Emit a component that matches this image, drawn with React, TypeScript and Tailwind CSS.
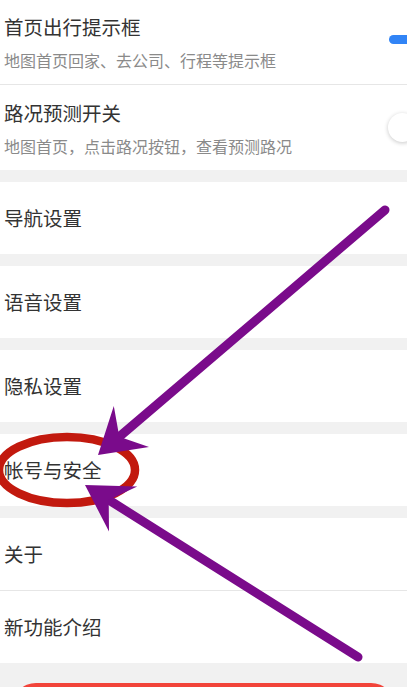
import React from "react";

function Band() {
  return <div className="h-[12px] bg-[#f1f1f1]" />;
}

function Row({ label, className = "" }: { label: string; className?: string }) {
  return (
    <div className={`flex items-center bg-white px-1 ${className}`}>
      <span className="text-[19.5px] leading-7 text-[#333333]">{label}</span>
    </div>
  );
}

export default function App() {
  return (
    <div className="relative h-[687px] w-full overflow-hidden bg-[#f1f1f1] font-['Noto_Sans_CJK_SC','Noto_Sans',sans-serif]">
      {/* Row 1 */}
      <div className="flex h-[85px] border-b border-[#e6e6e6] bg-white pl-1">
        <div className="flex flex-col pt-[13px]">
          <span className="text-[19.5px] leading-7 text-[#333333]">首页出行提示框</span>
          <span className="mt-2 text-[16px] leading-[22px] text-[#8a8a8a]">地图首页回家、去公司、行程等提示框</span>
        </div>
        <div className="ml-auto mt-[35px] h-[9px] w-[18px] shrink-0 self-start rounded-l-full bg-[#3184f6]" />
      </div>
      {/* Row 2 */}
      <div className="flex h-[85px] items-center bg-white pl-1">
        <div className="flex flex-col self-start pt-[14px]">
          <span className="text-[19.5px] leading-7 text-[#333333]">路况预测开关</span>
          <span className="mt-2 text-[16px] leading-[22px] text-[#8a8a8a]">地图首页，点击路况按钮，查看预测路况</span>
        </div>
        <div className="ml-auto -mr-[10px] h-[29px] w-[29px] shrink-0 rounded-full bg-white shadow-[0_1px_4px_rgba(0,0,0,0.22)]" />
      </div>
      <Band />
      <Row label="导航设置" className="h-[72px]" />
      <Band />
      <Row label="语音设置" className="h-[72px]" />
      <Band />
      <Row label="隐私设置" className="h-[72px]" />
      <Band />
      <Row label="帐号与安全" className="h-[72px]" />
      <Band />
      <Row label="关于" className="h-[73px] border-b border-[#e6e6e6]" />
      <Row label="新功能介绍" className="h-[72px]" />
      <div className="px-3 pt-[20px]">
        <div className="h-12 w-full rounded-full bg-[#f2443a]" />
      </div>

      {/* annotations */}
      <svg
        className="pointer-events-none absolute left-0 top-0"
        width="407"
        height="687"
        viewBox="0 0 407 687"
      >
        <ellipse cx="67" cy="470" rx="68" ry="33" fill="none" stroke="#c2190e" strokeWidth="8.5" />
        {/* arrow 1 */}
        <line x1="385" y1="210" x2="119" y2="437" stroke="#7a0b8b" strokeWidth="9" strokeLinecap="round" />
        <polygon points="98,455 113.8,405.9 119.3,436.8 149,446.9" fill="#7a0b8b" />
        {/* arrow 2 */}
        <line x1="358" y1="657" x2="108.7" y2="499.9" stroke="#7a0b8b" strokeWidth="9" strokeLinecap="round" />
        <polygon points="85,485 137.2,486.6 108.7,499.9 109,531.4" fill="#7a0b8b" />
      </svg>
    </div>
  );
}
